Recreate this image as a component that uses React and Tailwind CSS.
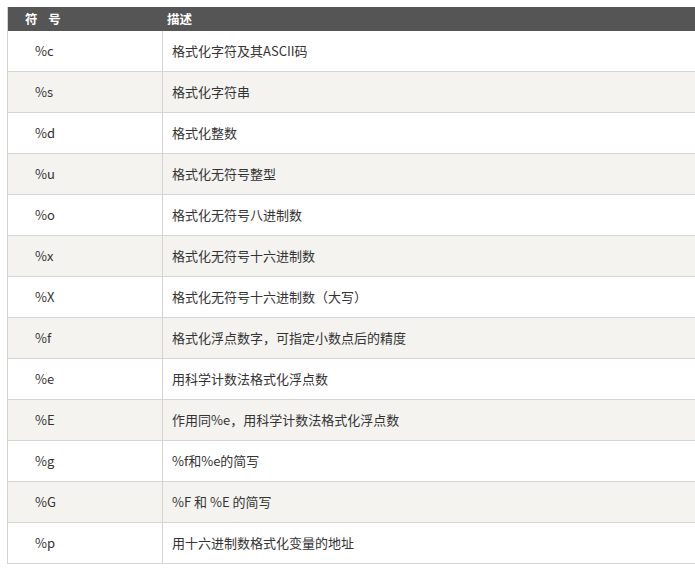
import React from "react";

const rows = [
  ["%c", "格式化字符及其ASCII码"],
  ["%s", "格式化字符串"],
  ["%d", "格式化整数"],
  ["%u", "格式化无符号整型"],
  ["%o", "格式化无符号八进制数"],
  ["%x", "格式化无符号十六进制数"],
  ["%X", "格式化无符号十六进制数（大写）"],
  ["%f", "格式化浮点数字，可指定小数点后的精度"],
  ["%e", "用科学计数法格式化浮点数"],
  ["%E", "作用同%e，用科学计数法格式化浮点数"],
  ["%g", "%f和%e的简写"],
  ["%G", "%F 和 %E 的简写"],
  ["%p", "用十六进制数格式化变量的地址"],
];

export default function App() {
  return (
    <div
      className="w-[695px] h-[573px] overflow-hidden bg-white pt-[7px] pl-[7px] text-[#333]"
      style={{ fontFamily: '"Microsoft YaHei", "Noto Sans CJK SC", "Noto Sans", sans-serif' }}
    >
      <div className="w-[720px] border-l border-[#d4d4d4]">
        <div className="grid grid-cols-[155px_1fr] h-[24px] bg-[#555555] text-white text-[12.5px] font-bold items-center">
          <div className="pl-[17px] tracking-[4px]">符 号</div>
          <div className="pl-[4px]">描述</div>
        </div>
        {rows.map(([a, b], i) => (
          <div
            key={a}
            className={`grid grid-cols-[155px_1fr] h-[41px] border-b border-[#d4d4d4] text-[13px] ${
              i % 2 === 1 ? "bg-[#f4f3f0]" : "bg-white"
            }`}
          >
            <div className="pl-[27px] flex items-center border-r border-[#d4d4d4]">{a}</div>
            <div className="pl-[9px] flex items-center">{b}</div>
          </div>
        ))}
      </div>
    </div>
  );
}
